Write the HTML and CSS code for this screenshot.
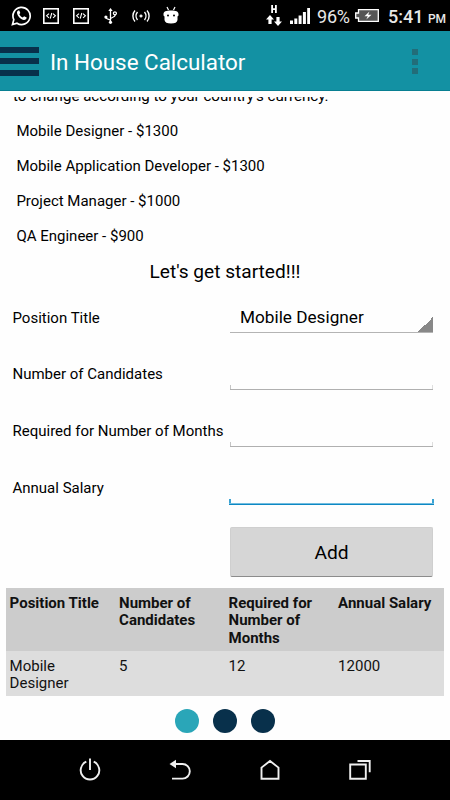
FILE: index.html
```html
<!DOCTYPE html>
<html lang="en">
<head>
    <meta charset="UTF-8">
    <meta name="viewport" content="width=device-width, initial-scale=1.0">
    <title>In House Calculator</title>
    <link rel="stylesheet" href="styles.css">
</head>
<body>
    <!-- Status bar -->
    <div class="status-bar">
        <div class="status-left">
            <svg class="whatsapp" width="21" height="21" viewBox="0 0 21 21">
                <path d="M1.5 19.5l1.3-4.9A8.6 8.6 0 1 1 6 18.2z" fill="none" stroke="#fff" stroke-width="1.7"/>
                <path d="M7.2 5.6c-1.5.9-1.6 2.7-.3 4.8 1.5 2.5 3.6 4.2 5.8 4.6 1.6.2 2.9-.8 3-2.4l-2.6-1.4-1.3 1.4c-1.6-.6-2.8-1.8-3.5-3.3l1-1.2-1-2.5z" fill="#fff"/>
            </svg>
            <svg class="code" width="16" height="16" viewBox="0 0 16 16" fill="none" stroke="#fff">
                <rect x=".8" y=".8" width="14.4" height="14.4" stroke-width="1.6"/>
                <path d="M6 5.7L3.6 7.8 6 9.9M10 5.7l2.4 2.1L10 9.9M8.8 5L7.2 10.7" stroke-width="1.1"/>
            </svg>
            <svg class="code" width="16" height="16" viewBox="0 0 16 16" fill="none" stroke="#fff">
                <rect x=".8" y=".8" width="14.4" height="14.4" stroke-width="1.6"/>
                <path d="M6 5.7L3.6 7.8 6 9.9M10 5.7l2.4 2.1L10 9.9M8.8 5L7.2 10.7" stroke-width="1.1"/>
            </svg>
            <svg class="usb" width="13" height="16" viewBox="0 0 13 16" fill="none" stroke="#fff" stroke-width="1.3">
                <path d="M6.500 2v12M1.700 9.500c0 1.800 4.800 1.300 4.800 3.300M11 6v1.600c0 1.700-4.500 1.600-4.500 3.500"/>
                <path d="M6.500 0l2.200 3H4.300z" fill="#fff" stroke="none"/>
                <circle cx="1.900" cy="9" r="1.600" fill="#fff" stroke="none"/>
                <circle cx="6.500" cy="14.300" r="1.600" fill="#fff" stroke="none"/>
                <circle cx="10.900" cy="5.300" r="1.500"/>
            </svg>
            <svg class="wireless" width="18" height="12" viewBox="0 0 18 12" fill="none" stroke="#fff" stroke-width="1.4">
                <path d="M3 .5C.2 3.500.2 8.500 3 11.500M5.500 2C3.600 4.300 3.600 7.700 5.500 10M15 .5c2.800 3 2.800 8 0 11M12.500 2c1.900 2.300 1.900 5.700 0 8M7.500 6h3M9 4.500v3"/>
            </svg>
            <svg class="robot" width="16" height="18" viewBox="0 0 16 18">
                <path d="M4 1l1.500 3M12 1l-1.500 3" stroke="#fff" stroke-width="1.200"/>
                <path d="M.5 9.500V8C.5 5.500 3 4.500 8 4.500s7.500 1 7.500 3.500v1.500l-1 1V14Q14 17.500 8 17.500T1.500 14v-3.500z" fill="#fff"/>
                <circle cx="5" cy="9.600" r="1"/>
                <circle cx="11" cy="9.600" r="1"/>
            </svg>
        </div>
        <div class="status-right">
            <svg class="data" width="16" height="22" viewBox="0 0 16 22" fill="#fff">
                <path d="M5.200 0h1.800v3.200h2V0h1.800v8H9V4.900H7V8H5.200z"/>
                <path d="M4 10l4 4.500H5.600V19H2.400v-4.500H0zM12 21l4-4.500h-2.400V12h-3.200v4.500H8z"/>
            </svg>
            <svg class="signal" width="20" height="16" viewBox="0 0 20 16" fill="#fff">
                <path d="M0 12.500h3V16H0zM4.300 10.500h3V16h-3zM8.600 7.500h3V16h-3zM12.900 4h3v12h-3zM17.200 0h3v16h-3z"/>
            </svg>
            <span class="percent">96%</span>
            <svg class="battery" width="24" height="13" viewBox="0 0 24 13">
                <path d="M3.500.7h19.800v11.600H3.500V9H.7V4h2.800z" fill="#555" stroke="#fff" stroke-width="1.300"/>
                <path d="M14.500 2.500L9.500 7.300h3.300l-1.500 3.200 5.200-4.800h-3.300z" fill="#fff"/>
            </svg>
            <span class="time">5:41 <small>PM</small></span>
        </div>
    </div>

    <header>
        <div class="hamburger">
            <span></span>
            <span></span>
            <span></span>
        </div>
        <h1>In House Calculator</h1>
        <div class="more">
            <span></span>
            <span></span>
            <span></span>
        </div>
    </header>

    <main>
        <section class="intro">
            <p class="note">to change according to your country's currency.</p>
            <ul class="salaries">
                <li>Mobile Designer - $1300</li>
                <li>Mobile Application Developer - $1300</li>
                <li>Project Manager - $1000</li>
                <li>QA Engineer - $900</li>
            </ul>
        </section>

        <h2>Let's get started!!!</h2>

        <form class="calculator">
            <label for="position">Position Title</label>
            <select id="position">
                <option>Mobile Designer</option>
            </select>

            <label for="candidates">Number of Candidates</label>
            <input type="text" id="candidates">

            <label for="months">Required for Number of Months</label>
            <input type="text" id="months">

            <label for="salary">Annual Salary</label>
            <input type="text" id="salary" class="active">

            <button type="button">Add</button>
        </form>

        <table>
            <thead>
                <tr>
                    <th>Position Title</th>
                    <th>Number of Candidates</th>
                    <th>Required for Number of Months</th>
                    <th>Annual Salary</th>
                </tr>
            </thead>
            <tbody>
                <tr>
                    <td>Mobile Designer</td>
                    <td>5</td>
                    <td>12</td>
                    <td>12000</td>
                </tr>
            </tbody>
        </table>

        <div class="dots">
            <span class="dot current"></span>
            <span class="dot"></span>
            <span class="dot"></span>
        </div>
    </main>

    <!-- System navigation -->
    <nav class="system-nav">
        <svg width="24" height="24" viewBox="0 0 24 24">
            <path d="M8.300 3.700a9.300 9.300 0 1 0 7.400 0M12 .5v11.500"/>
        </svg>
        <svg width="24" height="24" viewBox="0 0 24 24">
            <path d="M6 6h8.500a7.300 7.300 0 0 1 0 14.600H4"/>
            <path class="filled" d="M1.500 6L8 1.800v8.400z"/>
        </svg>
        <svg width="24" height="24" viewBox="0 0 24 24">
            <path d="M3.500 20.800V9.600L12 3l8.500 6.600v11.200z"/>
        </svg>
        <svg width="24" height="24" viewBox="0 0 24 24">
            <path d="M2.200 6.500h15.600v14.200H2.200zM9.500 3h12.200v11.200"/>
        </svg>
    </nav>
</body>
</html>
```

FILE: styles.css
```css
/* General Styles */
* {
    box-sizing: border-box;
}

body {
    font-family: Roboto, "Liberation Sans", sans-serif;
    font-size: 15px;
    margin: 0;
    height: 800px;
    display: flex;
    flex-direction: column;
    overflow: hidden;
    background-color: #fefefe;
    color: #000;
}

/* Status Bar */
.status-bar {
    height: 31px;
    flex-shrink: 0;
    display: flex;
    justify-content: space-between;
    background-color: #000;
    color: #e8e8e8;
}

.status-left,
.status-right {
    display: flex;
    align-items: center;
}

.status-left {
    padding-left: 11px;
}

.code {
    margin-left: 11px;
}

.code + .code {
    margin-left: 14px;
}

.usb {
    margin-left: 15px;
}

.wireless {
    margin-left: 15px;
}

.robot {
    margin: 0 0 2px 13px;
}

.status-right {
    padding-right: 6px;
}

.signal {
    margin: 1px 7px 0 8px;
}

.percent {
    width: 33px;
    margin-top: 2px;
    font-size: 18px;
    letter-spacing: -0.2px;
    white-space: nowrap;
}

.battery {
    margin: 0 9px 0 5px;
}

.time {
    width: 56px;
    margin-top: 2px;
    font-size: 18px;
    font-weight: 500;
    white-space: nowrap;
}

.time small {
    font-size: 12px;
}

/* Header */
header {
    height: 60px;
    flex-shrink: 0;
    display: flex;
    align-items: center;
    background-color: #1391a3;
    border-bottom: 1px solid #087f92;
    color: white;
}

.hamburger {
    width: 39px;
    display: flex;
    flex-direction: column;
    gap: 5.5px;
    padding-top: 1px;
}

.hamburger span {
    height: 6px;
    background-color: #08304b;
}

header h1 {
    margin: 3px 0 0 11px;
    font-size: 22.4px;
    font-weight: 400;
}

.more {
    display: flex;
    flex-direction: column;
    gap: 3.5px;
    margin: 2px 32px 0 auto;
}

.more span {
    width: 6px;
    height: 6px;
    background-color: #226d79;
}

/* Page Content */
main {
    flex: 1;
    padding: 6px 6px 0;
}

.intro {
    height: 157px;
    display: flex;
    flex-direction: column;
    justify-content: flex-end;
    overflow: hidden;
}

.note {
    margin: 0;
    padding-left: 7px;
    font-size: 15.1px;
    line-height: 18px;
}

.salaries {
    margin: 0;
    padding: 9px 0 0 10.4px;
    list-style: none;
}

.salaries li {
    line-height: 35px;
}

h2 {
    margin: 6px 0 0;
    font-size: 19.1px;
    font-weight: 400;
    line-height: 24px;
    text-align: center;
}

/* Calculator Form */
.calculator {
    display: grid;
    grid-template-columns: 217px 203px;
    grid-template-rows: 57px 57px 57px 56px 51px;
    padding: 16px 0 0 7px;
}

.calculator label {
    margin-left: -0.5px;
    line-height: 34px;
    white-space: nowrap;
}

.calculator label:first-child {
    line-height: 36px;
}

.calculator select,
.calculator input {
    width: 100%;
    height: 33px;
    padding: 0 10px;
    border: none;
    border-radius: 0;
    outline: none;
    font: 17.2px Roboto, sans-serif;
    color: #000;
    appearance: none;
}

.calculator select {
    padding-top: 2px;
    border-bottom: 1px solid #b4b4b4;
    background: linear-gradient(135deg, transparent 50%, #888 50%) right bottom / 15px 15px no-repeat;
}

/* Underline with short ticks at both ends */
.calculator input {
    background:
        linear-gradient(#b0b0b0, #b0b0b0) left bottom / 100% 1px no-repeat,
        linear-gradient(#c4c4c4, #c4c4c4) left bottom / 1px 5px no-repeat,
        linear-gradient(#dedede, #dedede) right bottom / 1px 5px no-repeat;
}

.calculator input.active {
    width: 205px;
    height: 34px;
    margin-left: -1px;
    background:
        linear-gradient(#72bde0 50%, #0d88c3 50%) left bottom / 100% 2px no-repeat,
        linear-gradient(#3aa3d3, #3aa3d3) left bottom / 2px 6px no-repeat,
        linear-gradient(#3aa3d3, #3aa3d3) right bottom / 2px 6px no-repeat;
}

.calculator button {
    grid-column: 2;
    height: 50px;
    padding: 0;
    border: 1px solid #cfcfcf;
    border-bottom-color: #8c8c8c;
    border-radius: 2px;
    background-color: #d6d6d6;
    font: 19.2px Roboto, sans-serif;
    color: #000;
}

/* Results Table */
table {
    width: 438px;
    margin-top: 10px;
    border-collapse: collapse;
    table-layout: fixed;
    line-height: 17.5px;
}

th,
td {
    padding: 6.5px 3px 3.5px 3.6px;
    text-align: left;
    vertical-align: top;
    color: #111;
}

th {
    font-weight: 700;
    background-color: #ccc;
}

td {
    padding-top: 7px;
    padding-bottom: 3px;
    background-color: #ddd;
}

/* Page Dots */
.dots {
    display: flex;
    justify-content: center;
    gap: 14px;
    margin-top: 13px;
}

.dot {
    width: 24px;
    height: 24px;
    border-radius: 50%;
    background-color: #08304b;
}

.dot.current {
    background-color: #2aa6b8;
}

/* System Navigation */
.system-nav {
    height: 60px;
    flex-shrink: 0;
    display: flex;
    align-items: center;
    justify-content: center;
    gap: 66px;
    padding-bottom: 1px;
    background-color: #000;
}

.system-nav path {
    fill: none;
    stroke: #f0f0f0;
    stroke-width: 1.900;
}

.system-nav .filled {
    fill: #f0f0f0;
    stroke: none;
}
```
